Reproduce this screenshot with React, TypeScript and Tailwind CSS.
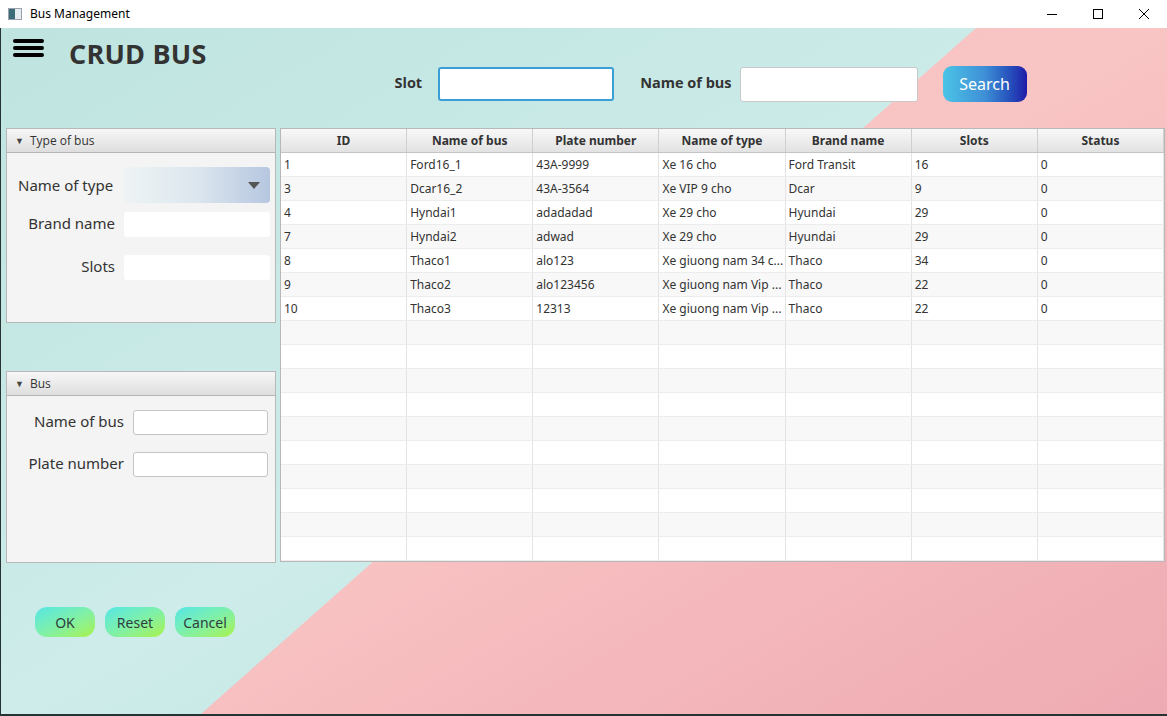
import React from 'react';

const FONT = "font-['Open_Sans','Noto_Sans',sans-serif]";

type Bus = {
  id: string;
  name: string;
  plate: string;
  type: string;
  brand: string;
  slots: string;
  status: string;
};

const buses: Bus[] = [
  { id: '1', name: 'Ford16_1', plate: '43A-9999', type: 'Xe 16 cho', brand: 'Ford Transit', slots: '16', status: '0' },
  { id: '3', name: 'Dcar16_2', plate: '43A-3564', type: 'Xe VIP 9 cho', brand: 'Dcar', slots: '9', status: '0' },
  { id: '4', name: 'Hyndai1', plate: 'adadadad', type: 'Xe 29 cho', brand: 'Hyundai', slots: '29', status: '0' },
  { id: '7', name: 'Hyndai2', plate: 'adwad', type: 'Xe 29 cho', brand: 'Hyundai', slots: '29', status: '0' },
  { id: '8', name: 'Thaco1', plate: 'alo123', type: 'Xe giuong nam 34 c...', brand: 'Thaco', slots: '34', status: '0' },
  { id: '9', name: 'Thaco2', plate: 'alo123456', type: 'Xe giuong nam Vip ...', brand: 'Thaco', slots: '22', status: '0' },
  { id: '10', name: 'Thaco3', plate: '12313', type: 'Xe giuong nam Vip ...', brand: 'Thaco', slots: '22', status: '0' },
];

const columns = ['ID', 'Name of bus', 'Plate number', 'Name of type', 'Brand name', 'Slots', 'Status'];

const TitleBar = () => (
  <div className="h-[28px] bg-white flex items-center shrink-0">
    <div className="ml-[8px] w-[14px] h-[12px] border border-gray-400 bg-[#e8eef0] flex">
      <div className="w-[6px] h-full bg-[#3d6e77]" />
    </div>
    <span className="ml-[8px] text-[12px] text-black font-['Noto_Sans',sans-serif]">Bus Management</span>
    <div className="ml-auto flex items-center h-full">
      <div className="w-[46px] h-full flex items-center justify-center">
        <div className="w-[10px] h-px bg-black" />
      </div>
      <div className="w-[46px] h-full flex items-center justify-center">
        <div className="w-[10px] h-[10px] border border-black" />
      </div>
      <div className="w-[46px] h-full flex items-center justify-center">
        <svg width="12" height="12" viewBox="0 0 12 12">
          <path d="M1 1 L11 11 M11 1 L1 11" stroke="black" strokeWidth="1" />
        </svg>
      </div>
    </div>
  </div>
);

const PaneHeader = ({ title }: { title: string }) => (
  <div className="h-[24px] flex items-center px-[8px] gap-[6px] bg-gradient-to-b from-[#f7f7f7] to-[#dedede] border-b border-[#b5b5b5] text-[12px] text-[#333]">
    <span className="text-[9px] text-[#444]">▼</span>
    <span>{title}</span>
  </div>
);

const App = () => {
  return (
    <div className={`w-[1167px] h-[716px] flex flex-col overflow-hidden bg-[#263333] ${FONT}`}>
      <TitleBar />
      <div className="relative flex-1 ml-px mb-[2px] bg-gradient-to-br from-[#bfe4df] via-[#cdecea] to-[#bde2dc] overflow-hidden">
        <div className="absolute inset-0 bg-gradient-to-br from-[#f7c1c2] via-[#f9c4c4] to-[#eeaab2] [clip-path:polygon(975px_0,100%_0,100%_100%,200px_100%)]" />

        <div className="relative flex flex-col h-full">
          {/* top bar */}
          <div className="flex items-start h-[100px]">
            <div className="mt-[11px] ml-[12px] flex flex-col gap-[3px]">
              <div className="w-[31px] h-[4px] rounded-full bg-black" />
              <div className="w-[31px] h-[4px] rounded-full bg-black" />
              <div className="w-[31px] h-[4px] rounded-full bg-black" />
            </div>
            <h1 className="ml-[25px] mt-[6px] text-[27px] font-bold text-[#333] tracking-[0.2px]">CRUD BUS</h1>
            <div className="ml-[188px] mt-[38px] flex items-center">
              <span className="text-[14.5px] font-bold text-[#333] -mt-[2px]">Slot</span>
              <div className="ml-[16px] w-[176px] h-[34px] rounded-[3px] border-2 border-[#3a9fd6] bg-white" />
              <span className="ml-[26px] text-[14.5px] font-bold text-[#333] -mt-[2px]">Name of bus</span>
              <div className="ml-[8px] w-[178px] h-[35px] rounded-[3px] border border-[#c8c8c8] bg-white" />
              <button className="ml-[25px] w-[84px] h-[36px] rounded-[9px] bg-gradient-to-r from-[#4cc4e6] via-[#3f8fd6] to-[#2216a8] text-white text-[16px] font-['Noto_Sans',sans-serif]">
                Search
              </button>
            </div>
          </div>

          <div className="flex">
            {/* left column */}
            <div className="ml-[5px] w-[270px] flex flex-col">
              <div className="h-[195px] border border-[#b8b8b8] bg-[#f4f4f4] flex flex-col">
                <PaneHeader title="Type of bus" />
                <div className="flex flex-col pt-[14px] text-[15px] text-[#333] font-['Noto_Sans',sans-serif]">
                  <div className="flex items-center">
                    <span className="w-[117px] pl-[11px]">Name of type</span>
                    <div className="w-[146px] h-[36px] rounded-[4px] bg-gradient-to-r from-[#eef4f5] via-[#dce6ee] to-[#b6c7e0] flex items-center justify-end pr-[10px]">
                      <svg width="12" height="7" viewBox="0 0 12 7">
                        <path d="M0 0 L12 0 L6 7 Z" fill="#555" />
                      </svg>
                    </div>
                  </div>
                  <div className="flex items-center mt-[9px]">
                    <span className="w-[117px] pr-[9px] text-right -mt-[3px]">Brand name</span>
                    <div className="w-[146px] h-[25px] rounded-[3px] bg-white" />
                  </div>
                  <div className="flex items-center mt-[18px]">
                    <span className="w-[117px] pr-[9px] text-right -mt-[3px]">Slots</span>
                    <div className="w-[146px] h-[25px] rounded-[3px] bg-white" />
                  </div>
                </div>
              </div>

              <div className="mt-[48px] h-[192px] border border-[#b8b8b8] bg-[#f4f4f4] flex flex-col">
                <PaneHeader title="Bus" />
                <div className="flex flex-col pt-[14px] text-[15px] text-[#333] font-['Noto_Sans',sans-serif]">
                  <div className="flex items-center">
                    <span className="w-[126px] pr-[9px] text-right -mt-[3px]">Name of bus</span>
                    <div className="w-[135px] h-[25px] rounded-[3px] border border-[#c4c4c4] bg-white" />
                  </div>
                  <div className="flex items-center mt-[17px]">
                    <span className="w-[126px] pr-[9px] text-right -mt-[3px]">Plate number</span>
                    <div className="w-[135px] h-[25px] rounded-[3px] border border-[#c4c4c4] bg-white" />
                  </div>
                </div>
              </div>

              <div className="mt-[44px] ml-[29px] flex gap-[10px]">
                {['OK', 'Reset', 'Cancel'].map((label) => (
                  <button
                    key={label}
                    className="w-[60px] h-[30px] rounded-[12px] bg-gradient-to-br from-[#55e6e6] via-[#7ef0a8] to-[#a9f23f] text-[14px] text-[#2f3e3e] font-['Noto_Sans',sans-serif]"
                  >
                    {label}
                  </button>
                ))}
              </div>
            </div>

            {/* table */}
            <div className="ml-[4px] w-[885px] h-[434px] border border-[#b8b8b8] bg-white flex flex-col font-['Noto_Sans',sans-serif]">
              <div className="grid grid-cols-7 h-[24px] bg-gradient-to-b from-[#f8f8f8] to-[#e2e2e2] border-b border-[#c4c4c4]">
                {columns.map((c) => (
                  <div key={c} className="flex items-center justify-center border-r border-[#cfcfcf] text-[12px] font-bold text-[#333]">
                    {c}
                  </div>
                ))}
              </div>
              {Array.from({ length: 17 }).map((_, i) => {
                const b = buses[i];
                const cells = b ? [b.id, b.name, b.plate, b.type, b.brand, b.slots, b.status] : ['', '', '', '', '', '', ''];
                return (
                  <div key={i} className={`grid grid-cols-7 h-[24px] border-b border-[#ececec] ${i % 2 === 1 ? 'bg-[#f8f8f8]' : 'bg-white'}`}>
                    {cells.map((v, j) => (
                      <div key={j} className="flex items-center px-[3px] border-r border-[#e4e4e4] text-[12px] text-[#333] whitespace-nowrap overflow-hidden">
                        {v}
                      </div>
                    ))}
                  </div>
                );
              })}
            </div>
          </div>
        </div>
      </div>
    </div>
  );
};

export default App;
